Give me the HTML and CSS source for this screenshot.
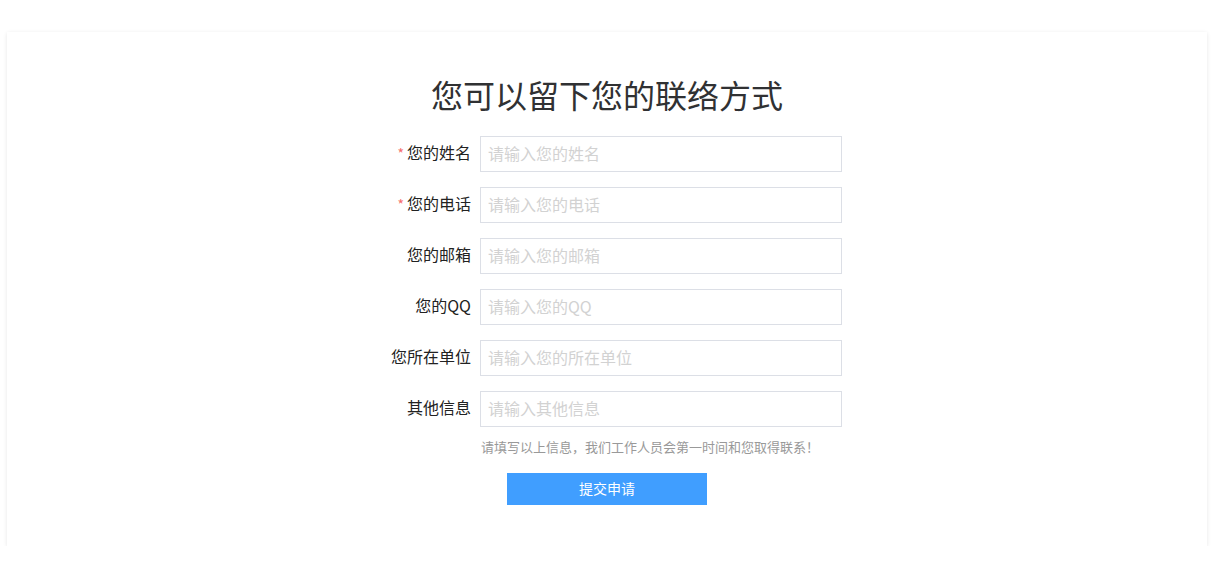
FILE: index.html
```html
<!DOCTYPE html>
<html lang="zh-CN">
<head>
<meta charset="utf-8">
<title>联系方式</title>
<link rel="stylesheet" href="styles.css">
</head>
<body>
<div class="card">
  <h1 class="title">您可以留下您的联络方式</h1>
  <form class="form">
    <div class="row">
      <label class="label"><span class="req">*</span>您的姓名</label>
      <input class="input" type="text" placeholder="请输入您的姓名">
    </div>
    <div class="row">
      <label class="label"><span class="req">*</span>您的电话</label>
      <input class="input" type="text" placeholder="请输入您的电话">
    </div>
    <div class="row">
      <label class="label">您的邮箱</label>
      <input class="input" type="text" placeholder="请输入您的邮箱">
    </div>
    <div class="row">
      <label class="label">您的QQ</label>
      <input class="input" type="text" placeholder="请输入您的QQ">
    </div>
    <div class="row">
      <label class="label">您所在单位</label>
      <input class="input" type="text" placeholder="请输入您的所在单位">
    </div>
    <div class="row">
      <label class="label">其他信息</label>
      <input class="input" type="text" placeholder="请输入其他信息">
    </div>
    <div class="hint">请填写以上信息，我们工作人员会第一时间和您取得联系！</div>
  </form>
  <div class="actions">
    <button class="submit" type="button">提交申请</button>
  </div>
</div>
</body>
</html>
```
FILE: styles.css
```css
* { box-sizing: border-box; }
html, body {
  margin: 0;
  padding: 0;
  background: #ffffff;
  font-family: "Noto Sans CJK SC", "Noto Sans", sans-serif;
}
body {
  padding: 32px 8px 0 7px;
}
.card {
  width: 1200px;
  height: 514px;
  background: #ffffff;
  box-shadow: 0 1px 4px rgba(0, 0, 0, 0.10);
  padding-top: 42px;
}
.title {
  margin: 0;
  font-size: 32px;
  line-height: 40px;
  font-weight: 400;
  color: #303133;
  text-align: center;
}
.form {
  width: 470px;
  margin: 22px auto 0;
  display: flex;
  flex-direction: column;
  gap: 15px;
}
.row {
  display: flex;
  align-items: center;
  height: 36px;
}
.label {
  width: 108px;
  padding: 0 9px 3px 0;
  text-align: right;
  font-size: 16px;
  color: #222222;
  line-height: 33px;
  white-space: nowrap;
}
.req {
  color: #f56c6c;
  font-size: 14px;
  margin-right: 3px;
}
.input {
  width: 362px;
  height: 36px;
  border: 1px solid #dcdfe6;
  border-radius: 0;
  padding: 0 7px 3px;
  font-size: 16px;
  font-family: inherit;
  color: #333;
  outline: none;
  background: #fff;
}
.input::placeholder {
  color: #d2d2d2;
}
.hint {
  margin-top: -5px;
  padding-left: 109px;
  font-size: 13px;
  line-height: 20px;
  color: #999999;
  white-space: nowrap;
}
.actions {
  display: flex;
  justify-content: center;
  margin-top: 16px;
}
.submit {
  width: 200px;
  height: 32px;
  border: none;
  border-radius: 0;
  background: #409eff;
  color: #ffffff;
  font-size: 14px;
  font-family: inherit;
  padding: 0 0 2px;
  cursor: pointer;
}
```
